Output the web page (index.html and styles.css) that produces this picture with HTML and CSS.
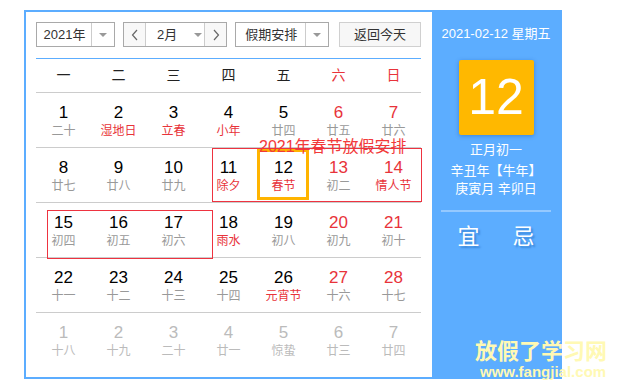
FILE: index.html
```html
<!DOCTYPE html>
<html>
	<head>
		<meta charset="utf-8">
		<title>万年历</title>
		<link rel="stylesheet" href="styles.css">
	</head>
	<body>
		<div class="calendar">
			<div class="main">
				<div class="bar">
					<div class="sel sel-year">
						<span class="sel-txt">2021年</span>
						<span class="sel-arr"><i></i></span>
					</div>
					<div class="month">
						<span class="mbtn"><svg width="8" height="12" viewBox="0 0 8 12"><polyline points="6,1 1.5,6 6,11" fill="none" stroke="#666" stroke-width="1.2"/></svg></span>
						<span class="mtxt">2月<i></i></span>
						<span class="mbtn"><svg width="8" height="12" viewBox="0 0 8 12"><polyline points="2,1 6.5,6 2,11" fill="none" stroke="#666" stroke-width="1.2"/></svg></span>
					</div>
					<div class="sel sel-holiday">
						<span class="sel-txt">假期安排</span>
						<span class="sel-arr"><i></i></span>
					</div>
					<a href="" class="today">返回今天</a>
				</div>
				<div class="week">
					<span>一</span><span>二</span><span>三</span><span>四</span><span>五</span><span class="red">六</span><span class="red">日</span>
				</div>
				<div class="row">
					<div class="day"><b>1</b><em>二十</em></div>
					<div class="day"><b>2</b><em class="fest">湿地日</em></div>
					<div class="day"><b>3</b><em class="fest">立春</em></div>
					<div class="day"><b>4</b><em class="fest">小年</em></div>
					<div class="day"><b>5</b><em>廿四</em></div>
					<div class="day wk"><b>6</b><em>廿五</em></div>
					<div class="day wk"><b>7</b><em>廿六</em></div>
				</div>
				<div class="row">
					<div class="day"><b>8</b><em>廿七</em></div>
					<div class="day"><b>9</b><em>廿八</em></div>
					<div class="day"><b>10</b><em>廿九</em></div>
					<div class="day"><b>11</b><em class="fest">除夕</em></div>
					<div class="day on"><b>12</b><em class="fest">春节</em></div>
					<div class="day wk"><b>13</b><em>初二</em></div>
					<div class="day wk"><b>14</b><em class="fest">情人节</em></div>
				</div>
				<div class="row">
					<div class="day"><b>15</b><em>初四</em></div>
					<div class="day"><b>16</b><em>初五</em></div>
					<div class="day"><b>17</b><em>初六</em></div>
					<div class="day"><b>18</b><em class="fest">雨水</em></div>
					<div class="day"><b>19</b><em>初八</em></div>
					<div class="day wk"><b>20</b><em>初九</em></div>
					<div class="day wk"><b>21</b><em>初十</em></div>
				</div>
				<div class="row">
					<div class="day"><b>22</b><em>十一</em></div>
					<div class="day"><b>23</b><em>十二</em></div>
					<div class="day"><b>24</b><em>十三</em></div>
					<div class="day"><b>25</b><em>十四</em></div>
					<div class="day"><b>26</b><em class="fest">元宵节</em></div>
					<div class="day wk"><b>27</b><em>十六</em></div>
					<div class="day wk"><b>28</b><em>十七</em></div>
				</div>
				<div class="row next">
					<div class="day"><b>1</b><em>十八</em></div>
					<div class="day"><b>2</b><em>十九</em></div>
					<div class="day"><b>3</b><em>二十</em></div>
					<div class="day"><b>4</b><em>廿一</em></div>
					<div class="day"><b>5</b><em>惊蛰</em></div>
					<div class="day"><b>6</b><em>廿三</em></div>
					<div class="day"><b>7</b><em>廿四</em></div>
				</div>
				<p class="mark-txt">2021年春节放假安排</p>
				<div class="mark mark1"></div>
				<div class="mark mark2"></div>
			</div>
			<div class="side">
				<p class="side-date">2021-02-12 星期五</p>
				<div class="big">12</div>
				<p class="lunar1">正月初一</p>
				<p class="lunar2">辛丑年【牛年】</p>
				<p class="lunar3">庚寅月 辛卯日</p>
				<div class="yiji"><span>宜</span><span>忌</span></div>
			</div>
		</div>
		<div class="wm">
			<p class="wm1">放假了学习网</p>
			<p class="wm2">www.fangjial.com</p>
		</div>
	</body>
</html>
```

FILE: styles.css
```css
body,p,div{margin:0; padding:0;}
a{text-decoration:none; color:#333;}
body{font-family:"Liberation Sans","Noto Sans CJK SC",sans-serif;font-size:13px;color:#333;background:#fff;}
i,em,b{font-style:normal;font-weight:normal;}
.calendar{
	display:flex;
	width:534px;
	margin:10px 0 0 24px;
	border:2px solid #5cadff;
}
.main{
	position:relative;
	width:385px;
	height:355px;
	padding:10px 11px 0 10px;
	background:#fff;
}
.bar{
	display:flex;
	height:25px;
}
.sel{
	display:flex;
	height:25px;
	box-sizing:border-box;
	border:1px solid #a9a9a9;
	line-height:23px;
}
.sel-txt{
	display:block;
	text-align:center;
	border-right:1px solid #ccc;
}
.sel-arr{
	display:flex;
	align-items:center;
	justify-content:center;
	width:23px;
}
.sel-arr i,.mtxt i{
	display:block;
	width:0;
	height:0;
	border-left:4px solid transparent;
	border-right:4px solid transparent;
	border-top:4px solid #999;
}
.sel-year{width:79px;}
.sel-year .sel-txt{width:55px;padding-left:1px;}
.month{
	display:flex;
	width:104px;
	height:25px;
	box-sizing:border-box;
	margin-left:8px;
	border:1px solid #a9a9a9;
}
.mbtn{
	display:flex;
	align-items:center;
	justify-content:center;
	width:21px;
	background:#f8f8f8;
}
.mtxt{
	display:flex;
	align-items:center;
	width:60px;
	box-sizing:border-box;
	padding-left:11px;
	border-left:1px solid #ccc;
	border-right:1px solid #ccc;
	line-height:23px;
}
.mtxt i{margin-left:17px;}
.sel-holiday{width:94px;margin-left:8px;}
.sel-holiday .sel-txt{width:69px;padding-left:2px;}
.today{
	display:block;
	width:82px;
	height:25px;
	box-sizing:border-box;
	margin-left:10px;
	border:1px solid #d0d0d0;
	background:#f7f7f7;
	line-height:23px;
	text-align:center;
}
.week{
	display:grid;
	grid-template-columns:repeat(7,55px);
	height:33px;
	margin-top:11px;
	border-top:1px solid #5cadff;
	line-height:33px;
	text-align:center;
	font-size:14px;
	color:#222;
}
.red{color:#e8333a;}
.row{
	display:grid;
	grid-template-columns:repeat(7,55px);
	height:54px;
	border-top:1px solid #ccc;
}
.row.next{border-top:1px solid #ccc;}
.day{
	position:relative;
	padding-top:10px;
	text-align:center;
}
.day b{
	display:block;
	height:20px;
	line-height:20px;
	font-size:17px;
	color:#000;
}
.day em{
	display:block;
	line-height:17px;
	font-size:12px;
	color:#999;
}
.day em.fest{color:#e8333a;}
.day.wk b{color:#e8333a;}
.next .day b,.next .day em{color:#bbb;}
.day.on::before{
	content:"";
	position:absolute;
	top:1px;
	left:1px;
	right:2px;
	bottom:2px;
	border:3px solid #ffb400;
}
.mark{
	position:absolute;
	border:1px solid #ee3340;
}
.mark1{left:186px;top:136px;width:208px;height:52px;}
.mark2{left:21px;top:198px;width:164px;height:47px;}
.mark-txt{
	position:absolute;
	left:233px;
	top:126px;
	line-height:18px;
	font-size:16px;
	color:#f23a3a;
}
.side{
	width:128px;
	background:#5cadff;
	color:#fff;
	text-align:center;
}
.side-date{
	margin-top:13px;
	line-height:18px;
	font-size:13px;
}
.big{
	width:75px;
	height:75px;
	margin:17px auto 0;
	border-radius:2px;
	background:#ffb800;
	box-shadow:0 1px 4px rgba(0,60,140,.35);
	line-height:75px;
	font-size:50px;
}
.lunar1{margin-top:6px;line-height:18px;}
.lunar2{margin-top:3px;line-height:18px;}
.lunar3{line-height:18px;}
.yiji{
	display:flex;
	justify-content:center;
	gap:33px;
	margin:12px 9px 0;
	padding-top:12px;
	border-top:2px solid #95c9ff;
	line-height:26px;
	font-size:22px;
	text-shadow:2px 2px 2px #3a86d8;
}
.wm{
	position:absolute;
	left:475px;
	top:339px;
	color:#fff9b4;
	font-weight:bold;
}
.wm1{line-height:26px;font-size:22px;}
.wm2{margin-left:5px;line-height:14px;font-size:15px;}
```
